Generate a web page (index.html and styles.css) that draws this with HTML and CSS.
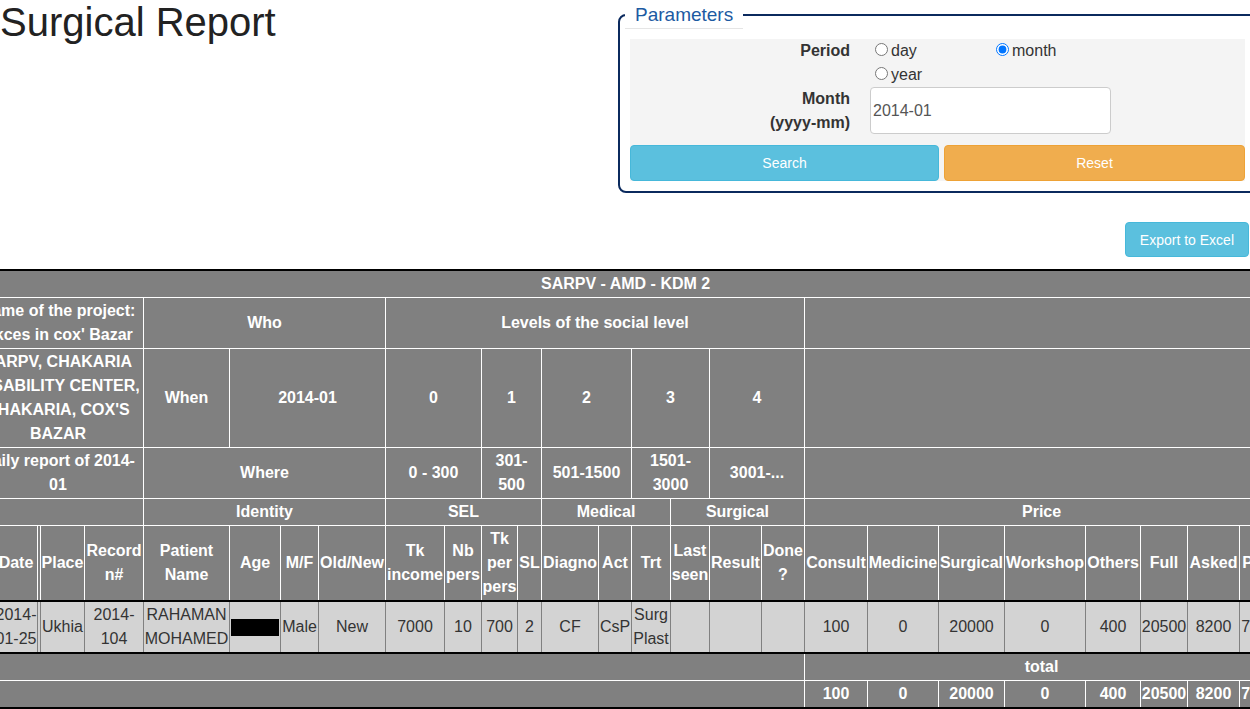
FILE: index.html
```html
<!DOCTYPE html>
<html>
    <head>
        <title>Surgical Report</title>
        <link rel="stylesheet" href="styles.css">
    </head>
    <body>
        <div class="page">
            <div class="top">
                <h1>Surgical Report</h1>

                <fieldset class="params">
                    <legend>Parameters</legend>
                    <div class="params-panel">
                        <label class="params-label">Period</label>
                        <div class="period-options">
                            <label class="period-option"><input type="radio" name="period" value="day">day</label>
                            <label class="period-option"><input type="radio" name="period" value="month" checked>month</label>
                            <label class="period-option"><input type="radio" name="period" value="year">year</label>
                        </div>

                        <label class="params-label" for="month">Month (yyyy-mm)</label>
                        <input class="month-input" type="text" id="month" value="2014-01">

                        <div class="params-buttons">
                            <button class="btn btn-info">Search</button>
                            <button class="btn btn-warning">Reset</button>
                        </div>
                    </div>
                </fieldset>
            </div>

            <div class="export-row">
                <button class="btn btn-info btn-export">Export to Excel</button>
            </div>

            <table class="report">
                <colgroup>
                    <col class="c-no"><col class="c-date"><col class="c-gap"><col class="c-place"><col class="c-record">
                    <col class="c-name"><col class="c-age"><col class="c-sex"><col class="c-oldnew">
                    <col class="c-income"><col class="c-nb"><col class="c-per"><col class="c-sl">
                    <col class="c-diagno"><col class="c-act"><col class="c-trt">
                    <col class="c-last"><col class="c-result"><col class="c-done">
                    <col class="c-consult"><col class="c-medicine"><col class="c-surgical"><col class="c-workshop">
                    <col class="c-others"><col class="c-full"><col class="c-asked"><col class="c-paid">
                </colgroup>
                <thead>
                    <tr>
                        <th colspan="27">SARPV - AMD - KDM 2</th>
                    </tr>
                    <tr>
                        <th colspan="5">Name of the project: Akces in cox' Bazar</th>
                        <th colspan="4">Who</th>
                        <th colspan="10">Levels of the social level</th>
                        <th colspan="8"></th>
                    </tr>
                    <tr>
                        <th colspan="5">SARPV, CHAKARIA DISABILITY CENTER, CHAKARIA, COX'S BAZAR</th>
                        <th>When</th>
                        <th colspan="3">2014-01</th>
                        <th colspan="2">0</th>
                        <th colspan="2">1</th>
                        <th colspan="2">2</th>
                        <th colspan="2">3</th>
                        <th colspan="2">4</th>
                        <th colspan="8"></th>
                    </tr>
                    <tr>
                        <th colspan="5">Daily report of 2014-01</th>
                        <th colspan="4">Where</th>
                        <th colspan="2">0 - 300</th>
                        <th colspan="2" class="narrow">301-500</th>
                        <th colspan="2">501-1500</th>
                        <th colspan="2" class="narrow">1501-3000</th>
                        <th colspan="2">3001-...</th>
                        <th colspan="8"></th>
                    </tr>
                    <tr>
                        <th colspan="5"></th>
                        <th colspan="4">Identity</th>
                        <th colspan="4">SEL</th>
                        <th colspan="3">Medical</th>
                        <th colspan="3">Surgical</th>
                        <th colspan="8">Price</th>
                    </tr>
                    <tr>
                        <th>N°</th>
                        <th>Date</th>
                        <th></th>
                        <th>Place</th>
                        <th>Record n#</th>
                        <th>Patient Name</th>
                        <th>Age</th>
                        <th>M/F</th>
                        <th>Old/New</th>
                        <th>Tk income</th>
                        <th>Nb pers</th>
                        <th>Tk per pers</th>
                        <th>SL</th>
                        <th>Diagno</th>
                        <th>Act</th>
                        <th>Trt</th>
                        <th>Last seen</th>
                        <th>Result</th>
                        <th>Done ?</th>
                        <th>Consult</th>
                        <th>Medicine</th>
                        <th>Surgical</th>
                        <th>Workshop</th>
                        <th>Others</th>
                        <th>Full</th>
                        <th>Asked</th>
                        <th>Paid</th>
                    </tr>
                </thead>
                <tbody>
                    <tr class="patient">
                        <td>1</td>
                        <td>2014-01-25</td>
                        <td></td>
                        <td>Ukhia</td>
                        <td>2014-104</td>
                        <td>RAHAMAN MOHAMED</td>
                        <td><span class="hidden-age"></span></td>
                        <td>Male</td>
                        <td>New</td>
                        <td>7000</td>
                        <td>10</td>
                        <td>700</td>
                        <td>2</td>
                        <td>CF</td>
                        <td>CsP</td>
                        <td>Surg Plast</td>
                        <td></td>
                        <td></td>
                        <td></td>
                        <td>100</td>
                        <td>0</td>
                        <td>20000</td>
                        <td>0</td>
                        <td>400</td>
                        <td>20500</td>
                        <td>8200</td>
                        <td>7000</td>
                    </tr>
                    <tr>
                        <th colspan="19"></th>
                        <th colspan="8">total</th>
                    </tr>
                    <tr>
                        <th colspan="19"></th>
                        <th>100</th>
                        <th>0</th>
                        <th>20000</th>
                        <th>0</th>
                        <th>400</th>
                        <th>20500</th>
                        <th>8200</th>
                        <th>7000</th>
                    </tr>
                </tbody>
            </table>
        </div>
    </body>
</html>
```

FILE: styles.css
```css
html,
body {
    overflow: hidden;
}

body {
    margin: 0;
    font-family: "Liberation Sans", Arial, sans-serif;
    font-size: 16px;
    line-height: 24px;
    color: #333;
}

.page {
    width: 1257px;
}

/* title + parameters box */
.top {
    display: flex;
    justify-content: space-between;
    align-items: flex-start;
}

h1 {
    margin: 0;
    font-size: 40px;
    font-weight: 400;
    line-height: 44px;
    color: #222;
}

.params {
    box-sizing: border-box;
    width: 639px;
    margin: 1px 0 0;
    padding: 10px 10px 10px 5px;
    border: 2px solid #0b2a5e;
    border-radius: 8px;
}

.params legend {
    padding: 0 10px;
    font-size: 19px;
    line-height: 27px;
    color: #1c5aa2;
    border-bottom: 1px solid #e5e5e5;
}

.params-panel {
    margin-left: 5px;
    background: #f4f4f4;
    display: grid;
    grid-template-columns: 220px 1fr;
    column-gap: 20px;
}

.params-label {
    justify-self: end;
    width: 90px;
    text-align: right;
    font-weight: bold;
}

.period-options {
    display: flex;
    flex-wrap: wrap;
    width: 250px;
}

.period-option {
    width: 121px;
}

.month-input {
    box-sizing: border-box;
    width: 241px;
    height: 47px;
    margin: 0;
    padding: 0 2px;
    border: 1px solid #ccc;
    border-radius: 4px;
    background: #fff;
    font: 16px "Liberation Sans", Arial, sans-serif;
    color: #555;
}

.params-buttons {
    grid-column: 1 / -1;
    display: grid;
    grid-template-columns: 309px 1fr;
    gap: 5px;
    margin-top: 10px;
}

.btn {
    height: 36px;
    border: 1px solid;
    border-radius: 4px;
    color: #fff;
    font: 14px "Liberation Sans", Arial, sans-serif;
}

.btn-info {
    background: #5bc0de;
    border-color: #46b8da;
}

.btn-warning {
    background: #f0ad4e;
    border-color: #eea236;
}

.export-row {
    display: flex;
    justify-content: flex-end;
    margin: 29px 8px 12px 0;
}

.btn-export {
    height: 35px;
    padding: 0 14px;
}

/* report table, wider than the window */
.report {
    width: 1306px;
    margin-left: -28px;
    table-layout: fixed;
    border-collapse: collapse;
    border-top: 2px solid #000;
    border-bottom: 2px solid #000;
}

.report th {
    padding: 1px 0;
    background: #808080;
    color: #fff;
    font-weight: bold;
    text-align: center;
    vertical-align: middle;
    border: 1px solid #fff;
}

.report th.narrow {
    padding: 1px 2px;
}

.report td {
    padding: 1px 0;
    background: #d3d3d3;
    color: #333;
    text-align: center;
    vertical-align: middle;
    border: 1px solid #808080;
    border-top: 2px solid #000;
    border-bottom: 2px solid #000;
}

.hidden-age {
    display: inline-block;
    width: 48px;
    height: 17px;
    background: #000;
    vertical-align: middle;
}

.c-no { width: 22px; }
.c-date { width: 43px; }
.c-gap { width: 3px; }
.c-place { width: 44px; }
.c-record { width: 59px; }
.c-name { width: 86px; }
.c-age { width: 51px; }
.c-sex { width: 38px; }
.c-oldnew { width: 67px; }
.c-income { width: 59px; }
.c-nb { width: 37px; }
.c-per { width: 36px; }
.c-sl { width: 24px; }
.c-diagno { width: 57px; }
.c-act { width: 33px; }
.c-trt { width: 39px; }
.c-last { width: 39px; }
.c-result { width: 52px; }
.c-done { width: 43px; }
.c-consult { width: 63px; }
.c-medicine { width: 71px; }
.c-surgical { width: 66px; }
.c-workshop { width: 81px; }
.c-others { width: 55px; }
.c-full { width: 47px; }
.c-asked { width: 52px; }
.c-paid { width: 39px; }
```
